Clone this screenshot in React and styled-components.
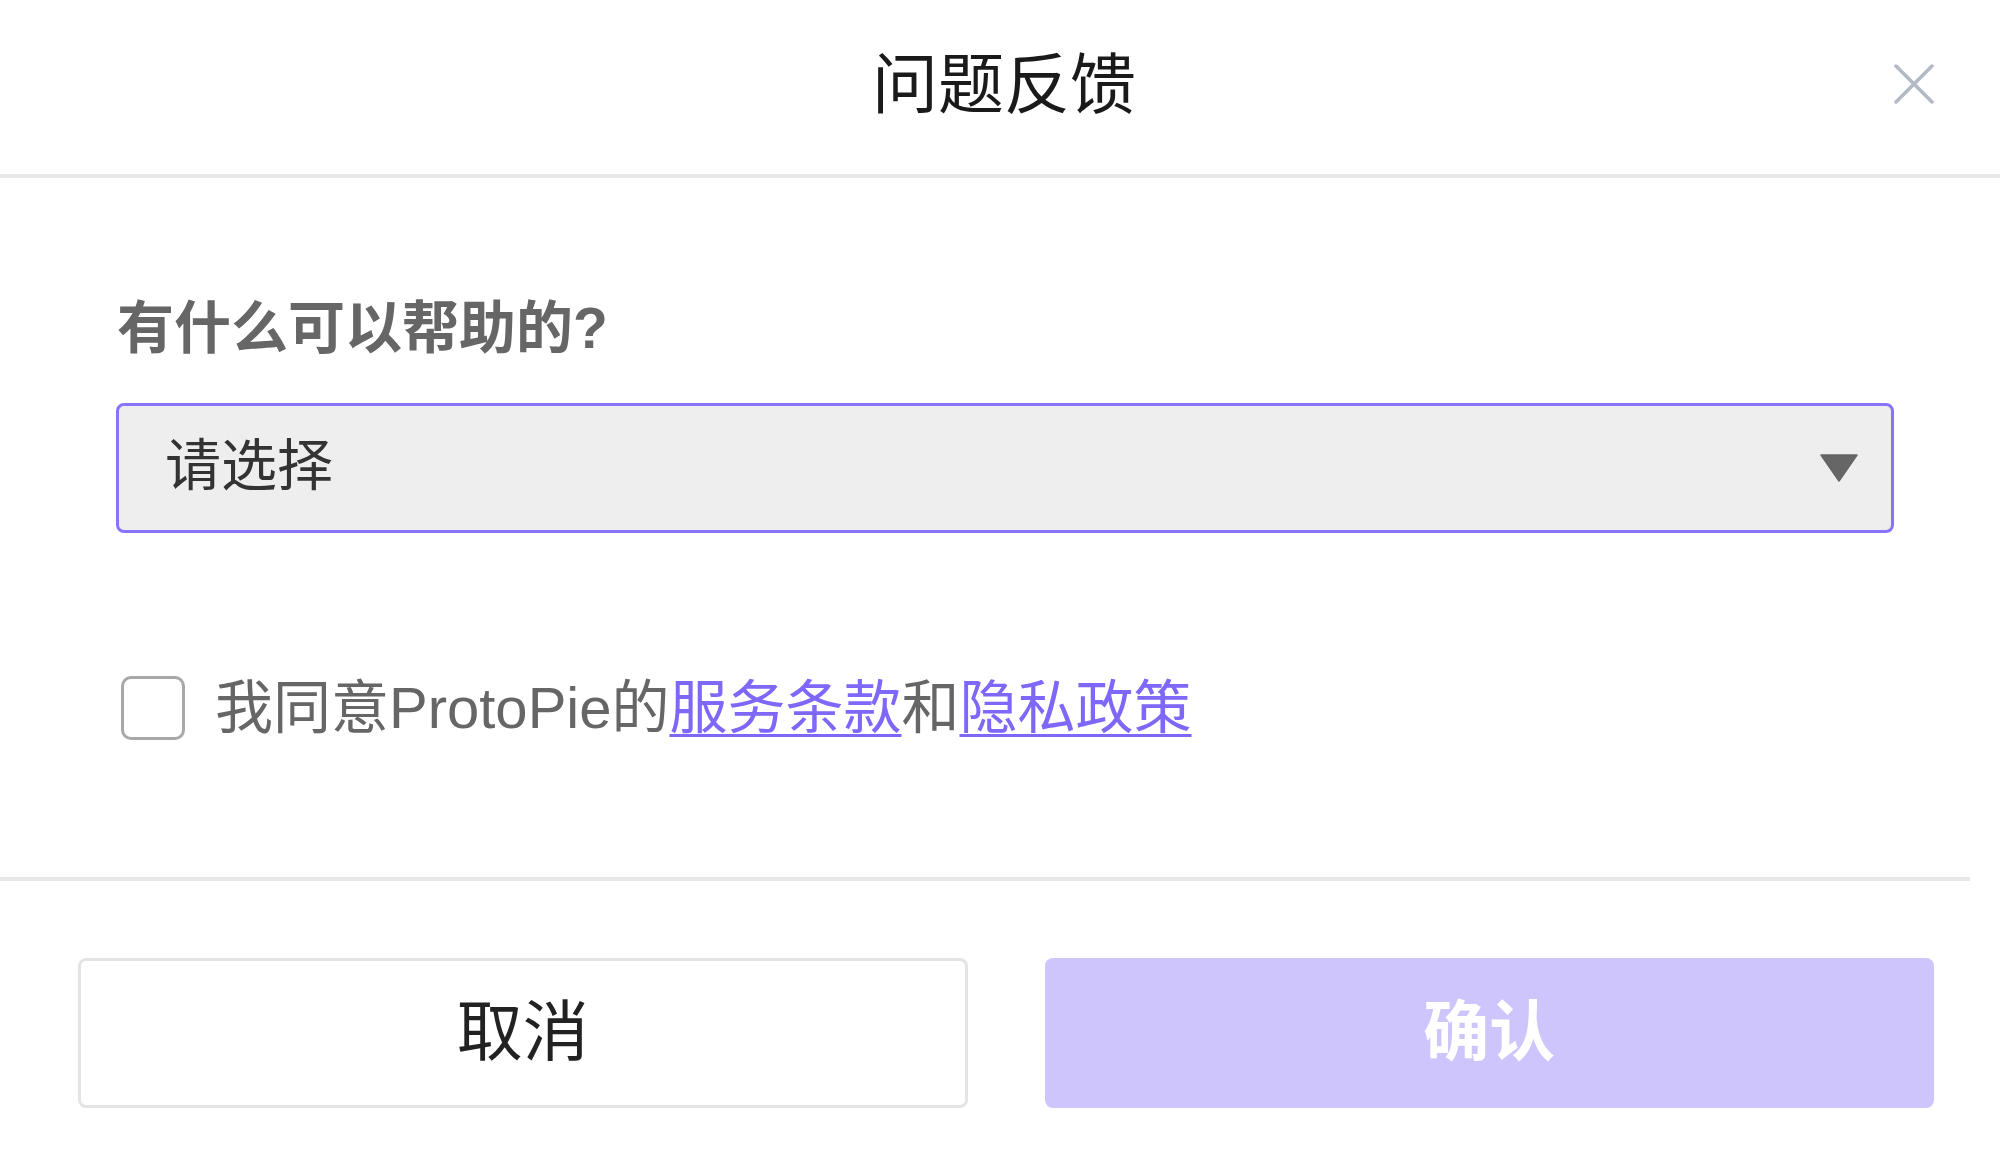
import React, { useState } from "react";
import styled, { createGlobalStyle } from "styled-components";

const GlobalStyle = createGlobalStyle`
  html, body {
    margin: 0;
    padding: 0;
    background: #ffffff;
  }
  * {
    box-sizing: border-box;
  }
  body {
    font-family: "Liberation Sans", "Noto Sans CJK SC", sans-serif;
  }
`;

const Modal = styled.div`
  width: 2000px;
  height: 1172px;
  background: #ffffff;
  display: flex;
  flex-direction: column;
  overflow: hidden;
`;

const Header = styled.div`
  position: relative;
  height: 178px;
  border-bottom: 4px solid #e8e8e8;
  display: flex;
  align-items: center;
  justify-content: center;
`;

const Title = styled.h1`
  margin: 0;
  padding-bottom: 4px;
  padding-left: 8px;
  font-size: 66px;
  font-weight: 400;
  color: #1a1a1a;
  line-height: 1;
`;

const CloseButton = styled.button`
  position: absolute;
  right: 66px;
  top: 64px;
  width: 40px;
  height: 40px;
  padding: 0;
  border: none;
  background: transparent;
  cursor: pointer;
  display: flex;
  align-items: center;
  justify-content: center;
`;

const Body = styled.div`
  padding: 111px 106px 0 116px;
  display: flex;
  flex-direction: column;
`;

const Label = styled.div`
  font-size: 57px;
  line-height: 78px;
  font-weight: 700;
  color: #666666;
  padding-left: 1px;
`;

const Select = styled.div`
  margin-top: 36px;
  height: 130px;
  border: 3px solid #8a73fb;
  border-radius: 8px;
  background: #eeeeee;
  display: flex;
  align-items: center;
  justify-content: space-between;
  padding: 0 33px 0 46px;
  cursor: pointer;
`;

const SelectText = styled.span`
  font-size: 56px;
  color: #333333;
  line-height: 1;
  padding-bottom: 4px;
`;

const AgreeRow = styled.label`
  margin-top: 136px;
  display: flex;
  align-items: center;
  gap: 30px;
  padding-left: 5px;
  cursor: pointer;
`;

const CheckBox = styled.span`
  width: 64px;
  height: 64px;
  flex: none;
  border: 3px solid ${(p) => (p.$checked ? "#8a73fb" : "#a8a8a8")};
  border-radius: 10px;
  background: ${(p) => (p.$checked ? "#8a73fb" : "#ffffff")};
`;

const AgreeText = styled.span`
  font-size: 58px;
  line-height: 78px;
  color: #666666;
`;

const Link = styled.a`
  color: #7f67fa;
  text-decoration: underline;
  text-decoration-thickness: 3px;
  text-underline-offset: 6px;
`;

const Divider = styled.div`
  margin-top: 130px;
  margin-right: 30px;
  height: 4px;
  background: #e8e8e8;
`;

const Footer = styled.div`
  padding: 77px 66px 0 78px;
  display: grid;
  grid-template-columns: 1fr 1fr;
  gap: 77px;
`;

const Button = styled.button`
  height: 150px;
  border-radius: 8px;
  font-family: inherit;
  font-size: 66px;
  line-height: 1;
  padding-bottom: 4px;
  cursor: pointer;
  border: ${(p) => (p.$primary ? "none" : "3px solid #e4e4e4")};
  background: ${(p) => (p.$primary ? "#cfc5fd" : "#ffffff")};
  color: ${(p) => (p.$primary ? "#ffffff" : "#222222")};
  font-weight: ${(p) => (p.$primary ? 700 : 400)};
`;

const CloseIcon = () => (
  <svg width="40" height="40" viewBox="0 0 40 40">
    <path d="M2 2 L38 38 M38 2 L2 38" stroke="#b3b9c5" strokeWidth="3.5" strokeLinecap="round" />
  </svg>
);

const CaretIcon = () => (
  <svg width="38" height="28" viewBox="0 0 38 28">
    <path d="M1 1 L37 1 L19 27 Z" fill="#666666" stroke="#666666" strokeWidth="1.5" strokeLinejoin="round" />
  </svg>
);

export default function App() {
  const [agreed, setAgreed] = useState(false);

  return (
    <Modal>
      <GlobalStyle />
      <Header>
        <Title>问题反馈</Title>
        <CloseButton aria-label="close">
          <CloseIcon />
        </CloseButton>
      </Header>

      <Body>
        <Label>有什么可以帮助的?</Label>
        <Select>
          <SelectText>请选择</SelectText>
          <CaretIcon />
        </Select>

        <AgreeRow onClick={() => setAgreed(!agreed)}>
          <CheckBox $checked={agreed} />
          <AgreeText>
            我同意ProtoPie的<Link href="#">服务条款</Link>和<Link href="#">隐私政策</Link>
          </AgreeText>
        </AgreeRow>
      </Body>

      <Divider />

      <Footer>
        <Button>取消</Button>
        <Button $primary disabled={!agreed}>确认</Button>
      </Footer>
    </Modal>
  );
}
